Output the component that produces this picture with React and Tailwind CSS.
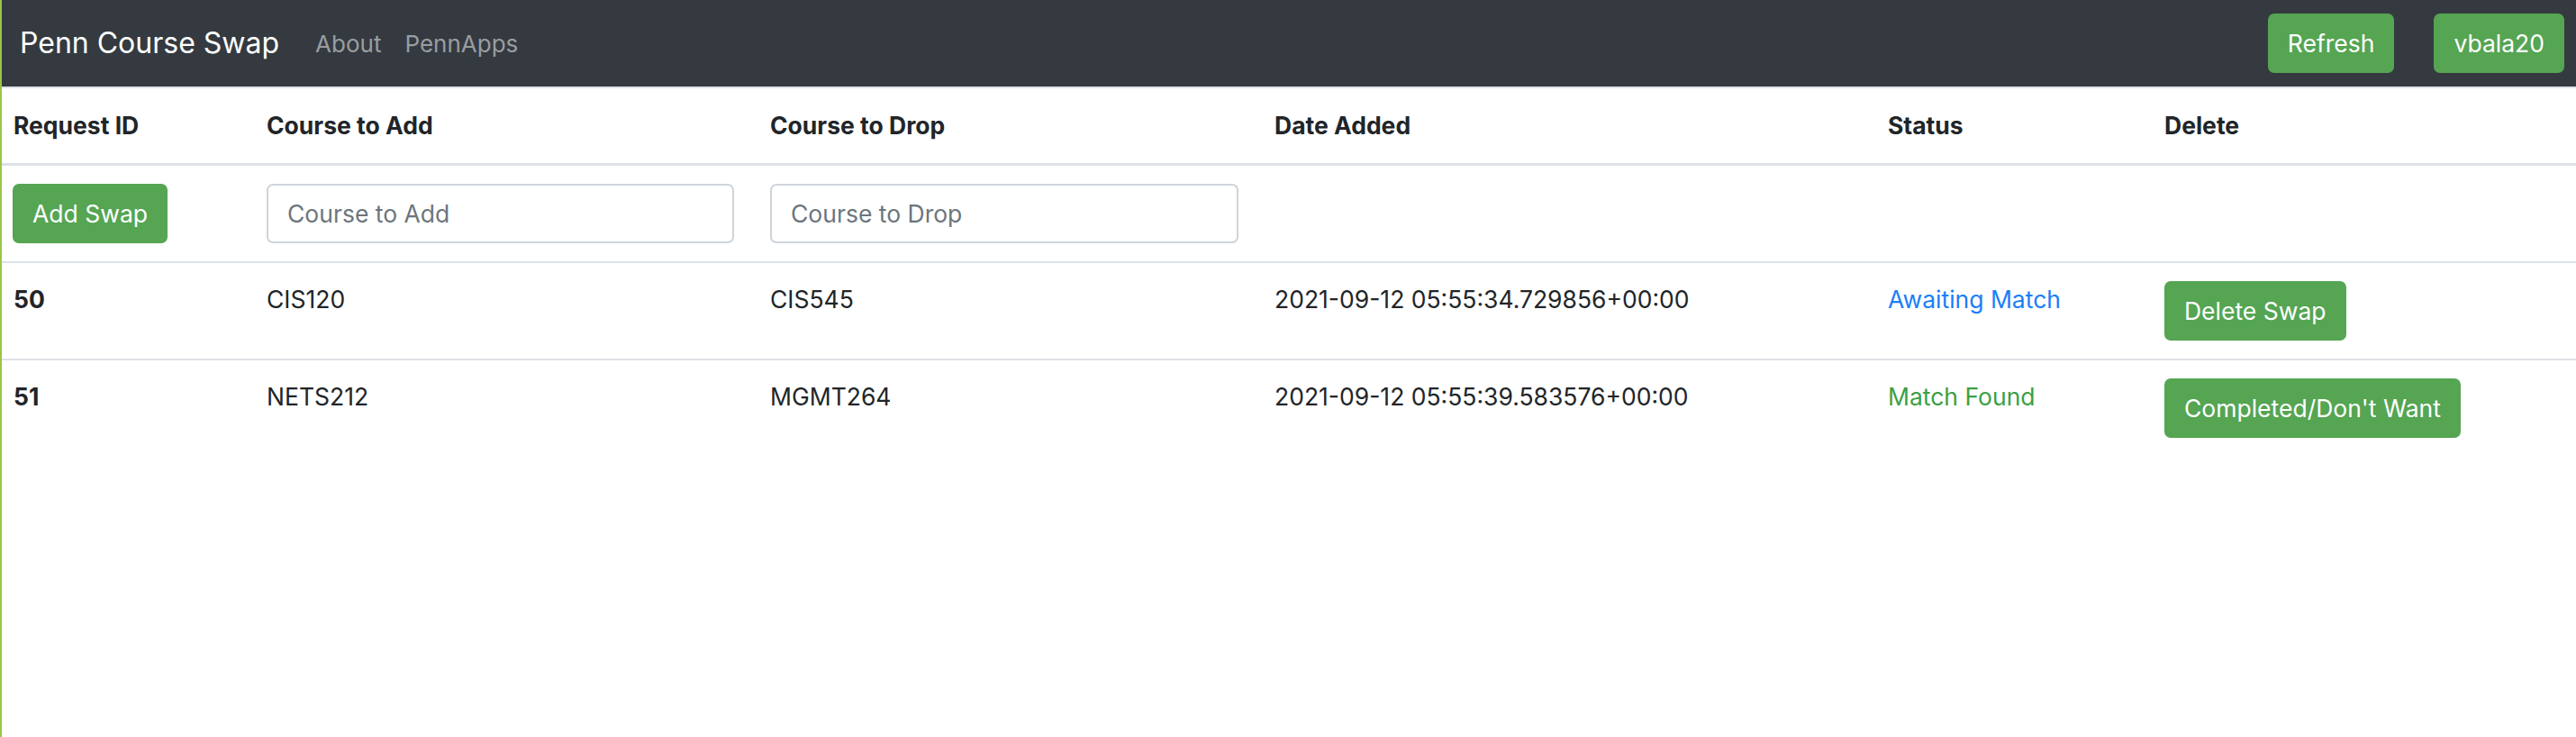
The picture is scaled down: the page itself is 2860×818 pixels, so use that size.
import React, { useState } from "react";

const swaps = [
  {
    id: 50,
    add: "CIS120",
    drop: "CIS545",
    date: "2021-09-12 05:55:34.729856+00:00",
    matched: false,
  },
  {
    id: 51,
    add: "NETS212",
    drop: "MGMT264",
    date: "2021-09-12 05:55:39.583576+00:00",
    matched: true,
  },
];

const GreenButton = ({ children, onClick }) => (
  <button
    onClick={onClick}
    className="h-[66px] px-[22px] rounded-[7px] bg-[#55a552] text-white text-[26.5px] leading-none whitespace-nowrap"
  >
    {children}
  </button>
);

const App = () => {
  let [courseAdd, setCourseAdd] = useState("");
  let [courseDrop, setCourseDrop] = useState("");

  return (
    <div
      className="min-h-[818px] bg-white border-l-2 border-[#9bc44a] text-[#212529]"
      style={{ fontFamily: "Inter, 'Liberation Sans', sans-serif" }}
    >
      {/* navbar */}
      <nav className="h-[96px] bg-[#343a40] flex items-center pl-[20px] pr-[13px]">
        <a href="#" className="text-[32px] text-white mr-[40px]">
          Penn Course Swap
        </a>
        <a href="#" className="text-[26px] text-[#9a9da0] mr-[26px]">
          About
        </a>
        <a href="#" className="text-[26px] text-[#9a9da0]">
          PennApps
        </a>
        <div className="ml-auto flex gap-[44px]">
          <GreenButton>Refresh</GreenButton>
          <GreenButton>vbala20</GreenButton>
        </div>
      </nav>

      <table className="w-full table-fixed border-collapse text-[26.5px] leading-[40px]">
        <thead>
          <tr className="border-t-2 border-[#dee2e6]">
            <th className="w-[274px] pl-[13px] pr-5 pt-[21px] pb-[22px] text-left font-bold border-b-[3px] border-[#dee2e6]">
              Request ID
            </th>
            <th className="w-[559px] px-5 pt-[21px] pb-[22px] text-left font-bold border-b-[3px] border-[#dee2e6]">
              Course to Add
            </th>
            <th className="w-[560px] px-5 pt-[21px] pb-[22px] text-left font-bold border-b-[3px] border-[#dee2e6]">
              Course to Drop
            </th>
            <th className="w-[681px] px-5 pt-[21px] pb-[22px] text-left font-bold border-b-[3px] border-[#dee2e6]">
              Date Added
            </th>
            <th className="w-[307px] px-5 pt-[21px] pb-[22px] text-left font-bold border-b-[3px] border-[#dee2e6]">
              Status
            </th>
            <th className="px-5 pt-[21px] pb-[22px] text-left font-bold border-b-[3px] border-[#dee2e6]">
              Delete
            </th>
          </tr>
        </thead>
        <tbody>
          <tr>
            <td className="pl-[12px] pr-5 py-5 align-top">
              <GreenButton>Add Swap</GreenButton>
            </td>
            <td className="px-5 py-5 align-top">
              <input
                value={courseAdd}
                onChange={(e) => setCourseAdd(e.target.value)}
                placeholder="Course to Add"
                className="block w-full h-[66px] px-[21px] rounded-[7px] border-2 border-[#ced4da] text-[26.5px] placeholder:text-[#6c757d] outline-none"
              />
            </td>
            <td className="px-5 py-5 align-top">
              <input
                value={courseDrop}
                onChange={(e) => setCourseDrop(e.target.value)}
                placeholder="Course to Drop"
                className="block w-full h-[66px] px-[21px] rounded-[7px] border-2 border-[#ced4da] text-[26.5px] placeholder:text-[#6c757d] outline-none"
              />
            </td>
            <td></td>
            <td></td>
            <td></td>
          </tr>
          {swaps.map((s) => (
            <tr key={s.id} className="border-t-2 border-[#dee2e6]">
              <td className="pl-[13px] pr-5 py-5 align-top font-bold">{s.id}</td>
              <td className="px-5 py-5 align-top">{s.add}</td>
              <td className="px-5 py-5 align-top">{s.drop}</td>
              <td className="px-5 py-5 align-top whitespace-nowrap">{s.date}</td>
              <td
                className={
                  s.matched
                    ? "px-5 py-5 align-top text-[#3aa044]"
                    : "px-5 py-5 align-top text-[#1a7ef8]"
                }
              >
                {s.matched ? "Match Found" : "Awaiting Match"}
              </td>
              <td className="px-5 py-5 align-top">
                <GreenButton>
                  {s.matched ? "Completed/Don't Want" : "Delete Swap"}
                </GreenButton>
              </td>
            </tr>
          ))}
        </tbody>
      </table>
    </div>
  );
};

export default App;
